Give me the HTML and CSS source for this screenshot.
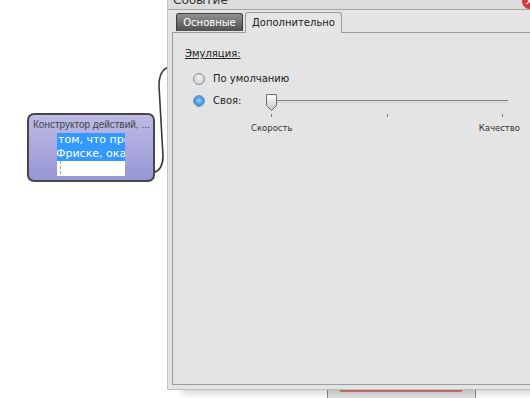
FILE: index.html
```html
<!DOCTYPE html>
<html lang="ru">
<head>
    <meta charset="UTF-8">
    <title>Событие</title>
    <link rel="stylesheet" href="styles.css">
</head>
<body>
    <div class="desk">
        <svg class="link" width="530" height="398" viewBox="0 0 530 398">
            <path d="M153,173 C160,171 163,166 163,156 L159,86 C159,75 162,69 169,67" fill="none" stroke="#3a3a3a" stroke-width="1.6"/>
        </svg>

        <div class="node">
            <div class="node-title">Конструктор действий, ...</div>
            <div class="node-edit">
                <div class="sel">том, что про</div>
                <div class="sel shift">Фриске, оказ</div>
                <div class="caret"></div>
            </div>
        </div>

        <div class="behind"><div class="behind-bar"></div></div>

        <div class="window">
            <div class="titlebar">
                <span class="title">Событие</span>
                <span class="close">&times;</span>
            </div>
            <div class="tabs">
                <div class="tab">Основные</div>
                <div class="tab active">Дополнительно</div>
            </div>
            <div class="panel">
                <div class="legend">Эмуляция:</div>
                <div class="option">
                    <span class="radio"></span>
                    <span class="opt-label">По умолчанию</span>
                </div>
                <div class="option">
                    <span class="radio checked"></span>
                    <span class="opt-label short">Своя:</span>
                    <div class="slider">
                        <div class="track-row">
                            <svg class="thumb" width="11" height="18" viewBox="0 0 11 18">
                                <defs>
                                    <linearGradient id="tg" x1="0" y1="0" x2="0" y2="1">
                                        <stop offset="0" stop-color="#ffffff"/>
                                        <stop offset="1" stop-color="#c4c4c4"/>
                                    </linearGradient>
                                </defs>
                                <path d="M0.5,0.5 H10.5 V11.5 L5.5,16.5 L0.5,11.5 Z" fill="url(#tg)" stroke="#6e6e6e"/>
                            </svg>
                            <div class="track"></div>
                        </div>
                        <div class="ticks">
                            <span class="tick"></span>
                            <span class="tick"></span>
                            <span class="tick"></span>
                        </div>
                        <div class="scale-labels">
                            <span>Скорость</span>
                            <span>Качество</span>
                        </div>
                    </div>
                </div>
            </div>
        </div>
    </div>
</body>
</html>
```

FILE: styles.css
```css
body, html {
    margin: 0;
    background: #ffffff;
    font-family: "DejaVu Sans", Verdana, sans-serif;
    color: #222222;
}
.desk {
    position: relative;
    width: 530px;
    height: 398px;
    overflow: hidden;
    background: #ffffff;
}
.link {
    position: absolute;
    left: 0;
    top: 0;
}

/* diagram node */
.node {
    position: absolute;
    left: 27px;
    top: 113px;
    width: 128px;
    height: 69px;
    box-sizing: border-box;
    border: 2px solid #474747;
    border-radius: 7px;
    background: linear-gradient(#bdbbe6, #9896d5);
    display: flex;
    flex-direction: column;
    align-items: center;
}
.node-title {
    align-self: stretch;
    margin-top: 4px;
    padding-left: 4px;
    font-family: "Liberation Sans", Arial, sans-serif;
    font-size: 10px;
    line-height: 12px;
    color: #444444;
    white-space: nowrap;
}
.node-edit {
    margin-top: 2px;
    width: 68px;
    height: 43px;
    background: #ffffff;
    overflow: hidden;
}
.sel {
    height: 14px;
    line-height: 14px;
    background: #3399ff;
    color: #ffffff;
    font-size: 11px;
    white-space: nowrap;
    padding-left: 1px;
}
.sel.shift {
    padding-left: 0;
    text-indent: -1px;
}
.caret {
    width: 0;
    height: 13px;
    margin-left: 3px;
    border-left: 1px dashed #8aa8c8;
}

/* thing behind the dialog */
.behind {
    position: absolute;
    left: 327px;
    top: 380px;
    width: 149px;
    height: 30px;
    box-sizing: border-box;
    border-left: 1px solid #8c8c8c;
    border-right: 1px solid #8c8c8c;
    background: #e2e2e2;
    padding: 9px 12px 0 11px;
}
.behind-bar {
    height: 3px;
    background: #d27b6c;
    border-radius: 0 0 3px 3px;
}

/* dialog window */
.window {
    position: absolute;
    left: 167px;
    top: -12px;
    width: 400px;
    height: 402px;
    box-sizing: border-box;
    border-left: 1px solid #c6c6c6;
    border-bottom: 1px solid #bdbdbd;
    background: #e4e4e4;
    padding: 0 0 4px 4px;
    display: flex;
    flex-direction: column;
    box-shadow: 12px 7px 7px -3px rgba(0, 0, 0, 0.16);
}
.titlebar {
    height: 21px;
    margin-left: -4px;
    border-bottom: 1px solid #a6a6a6;
    background: #dcdcdc;
    position: relative;
}
.title {
    position: absolute;
    left: 5px;
    top: 5px;
    font-size: 12px;
    color: #333333;
}
.close {
    position: absolute;
    left: 354px;
    top: 6px;
    width: 15px;
    height: 15px;
    border-radius: 50%;
    background: #d53a3a;
    color: #ffffff;
    font-size: 12px;
    line-height: 15px;
    text-align: center;
}
.tabs {
    display: flex;
    align-items: flex-end;
    gap: 2px;
    margin: 2px 0 0 4px;
}
.tab {
    height: 17px;
    width: 65px;
    border: 1px solid #3e3e3e;
    border-bottom: none;
    border-radius: 3px 3px 0 0;
    background: linear-gradient(#919191, #4f4f4f);
    color: #ffffff;
    font-size: 10px;
    line-height: 17px;
    text-align: center;
    margin-bottom: 1px;
}
.tab.active {
    height: 20px;
    width: 95px;
    border-color: #9c9c9c;
    background: #e6e6e6;
    color: #222222;
    line-height: 19px;
    margin-bottom: -1px;
    position: relative;
    z-index: 1;
}
.panel {
    flex: 1;
    border: 1px solid #9c9c9c;
    border-right: none;
    background: #e4e4e4;
    padding: 14px 0 0 12px;
}
.legend {
    font-size: 10px;
    line-height: 13px;
    text-decoration: underline;
    color: #222222;
    margin-bottom: 8px;
}
.option {
    display: flex;
    align-items: flex-start;
    height: 22px;
    margin-left: 8px;
}
.radio {
    width: 12px;
    height: 12px;
    box-sizing: border-box;
    margin-top: 5px;
    border: 1px solid #8e8e8e;
    border-radius: 50%;
    background: radial-gradient(circle at 50% 40%, #f4f4f4, #c8c8c8);
}
.radio.checked {
    border-color: #6f93b8;
    background: radial-gradient(circle at 50% 45%, #9fd6ff 0, #4aa4ee 45%, #3b86cc 70%, #dfe8f0 72%);
}
.opt-label {
    margin-left: 8px;
    font-size: 10px;
    line-height: 22px;
    color: #222222;
}
.opt-label.short {
    width: 53px;
}
.slider {
    width: 242px;
    margin-top: 4px;
}
.track-row {
    display: flex;
    align-items: flex-start;
    height: 18px;
}
.thumb {
    display: block;
}
.track {
    flex: 1;
    margin-top: 6px;
    height: 1px;
    border-top: 1px solid #7e7e7e;
    border-bottom: 1px solid #cfcfcf;
}
.ticks {
    display: flex;
    justify-content: space-between;
    margin: 2px 5px 0 5px;
    height: 3px;
}
.tick {
    width: 1px;
    height: 3px;
    background: #7a7a7a;
}
.scale-labels {
    display: flex;
    justify-content: space-between;
    margin: 6px -12px 0 -15px;
    font-size: 8.5px;
    line-height: 11px;
    color: #333333;
}
```
